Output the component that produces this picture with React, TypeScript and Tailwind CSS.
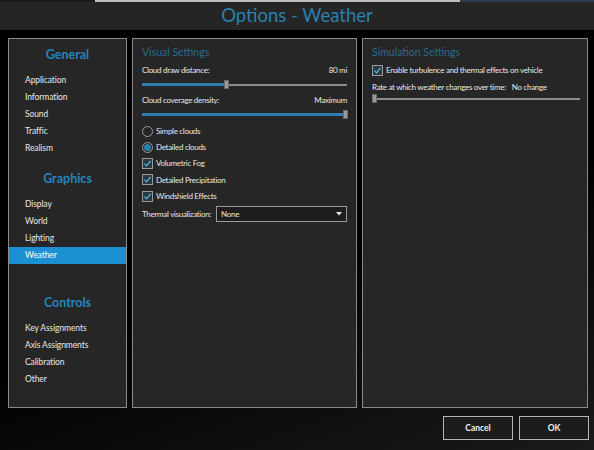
import React from "react";

const font = { fontFamily: 'Lato, "Open Sans", sans-serif' };

function NavItem({ label, selected }: { label: string; selected?: boolean }) {
  return (
    <div
      className={
        "h-[17px] pl-[16px] flex items-center text-[8.5px] tracking-[-0.1px] whitespace-nowrap " +
        (selected ? "bg-[#1b8fcf] text-white" : "text-[#e6e6e6]")
      }
    >
      {label}
    </div>
  );
}

function Header({ label }: { label: string }) {
  return (
    <div className="h-[30px] flex items-center justify-center text-[12.5px] font-bold text-[#2485bd]">
      {label}
    </div>
  );
}

function Slider({ pct, thumb }: { pct: number; thumb: number }) {
  return (
    <div className="relative h-[9px] flex items-center">
      <div className="w-full h-[2px] bg-[#8c8c8c]" />
      <div className="absolute left-0 h-[3px] bg-[#2a7fb0]" style={{ width: `${pct}%` }} />
      <div
        className="absolute w-[5px] h-[9px] bg-[#9a9a9a] border border-[#6a6a6a]"
        style={{ left: `calc(${thumb}% - 2px)` }}
      />
    </div>
  );
}

const txt = "text-[8px] tracking-[-0.3px] text-[#e6e6e6]";

function Check({ label }: { label: string }) {
  return (
    <div className="flex items-center h-[16px] gap-[3px] whitespace-nowrap">
      <div className="w-[11px] h-[11px] border border-[#9a9a9a] bg-[#2a3a44] flex items-center justify-center shrink-0">
        <svg width="9" height="9" viewBox="0 0 9 9">
          <path d="M1.5 4.6 L3.6 6.8 L7.6 1.8" stroke="#5fb3d8" strokeWidth="1.3" fill="none" />
        </svg>
      </div>
      <span className={txt}>{label}</span>
    </div>
  );
}

function Radio({ label, on }: { label: string; on?: boolean }) {
  return (
    <div className="flex items-center h-[16px] gap-[3px] whitespace-nowrap">
      <div className="w-[11px] h-[11px] rounded-full border border-[#9a9a9a] flex items-center justify-center shrink-0">
        {on && <div className="w-[7px] h-[7px] rounded-full bg-[#2a7fb0]" />}
      </div>
      <span className={txt}>{label}</span>
    </div>
  );
}

export default function App() {
  return (
    <div
      className="w-[594px] h-[450px] bg-[linear-gradient(160deg,#000_55%,#1a1a1a)] flex flex-col overflow-hidden"
      style={font}
    >
      <div className="h-[2px] flex">
        <div className="w-[95px] bg-[#1a1a1a]" />
        <div className="w-[365px] bg-[#bdbdbd]" />
        <div className="flex-1 bg-[#2c3b4d]" />
      </div>
      <div className="h-[28px] bg-[#252525] flex items-center justify-center text-[18.5px] text-[#2a80ae]">
        Options - Weather
      </div>
      <div className="flex gap-[5px] pl-[8px] pt-[8px] h-[378px]">
        <div className="w-[119px] h-[370px] border border-[#8a8a8a] bg-[#262626] pt-[1px]">
          <Header label="General" />
          <div className="pt-[2px]">
            <NavItem label="Application" />
            <NavItem label="Information" />
            <NavItem label="Sound" />
            <NavItem label="Traffic" />
            <NavItem label="Realism" />
          </div>
          <div className="h-[7px]" />
          <Header label="Graphics" />
          <div className="pt-[2px]">
            <NavItem label="Display" />
            <NavItem label="World" />
            <NavItem label="Lighting" />
            <NavItem label="Weather" selected />
          </div>
          <div className="h-[24px]" />
          <Header label="Controls" />
          <div className="pt-[2px]">
            <NavItem label="Key Assignments" />
            <NavItem label="Axis Assignments" />
            <NavItem label="Calibration" />
            <NavItem label="Other" />
          </div>
        </div>
        <div className="w-[225px] h-[370px] border border-[#8a8a8a] bg-[#262626] px-[9px] pt-[5px]">
          <div className="text-[10.5px] text-[#2a6a8e] h-[16px] leading-[16px]">Visual Settings</div>
          <div className={"flex justify-between h-[14px] items-center mt-[3px] " + txt}>
            <span>Cloud draw distance:</span>
            <span>80 mi</span>
          </div>
          <div className="mt-[3px]">
            <Slider pct={41} thumb={41} />
          </div>
          <div className={"flex justify-between h-[14px] items-center mt-[4px] " + txt}>
            <span>Cloud coverage density:</span>
            <span>Maximum</span>
          </div>
          <div className="mt-[3px]">
            <Slider pct={99} thumb={99} />
          </div>
          <div className="mt-[4px] flex flex-col">
            <Radio label="Simple clouds" />
            <Radio label="Detailed clouds" on />
            <Check label="Volumetric Fog" />
            <div className="h-[17px] flex items-center"><Check label="Detailed Precipitation" /></div>
            <Check label="Windshield Effects" />
          </div>
          <div className="flex items-center mt-[2px] gap-[5px]">
            <span className={"whitespace-nowrap " + txt}>Thermal visualization:</span>
            <div className="flex-1 h-[16px] border border-[#9a9a9a] bg-[#1e1e1e] flex items-center justify-between px-[4px]">
              <span className={txt}>None</span>
              <svg width="6" height="4" viewBox="0 0 6 4">
                <path d="M0 0 L6 0 L3 3.5 Z" fill="#e6e6e6" />
              </svg>
            </div>
          </div>
        </div>
        <div className="w-[226px] h-[370px] border border-[#8a8a8a] bg-[#262626] pl-[9px] pr-[7px] pt-[5px]">
          <div className="text-[10.5px] text-[#2a6a8e] h-[16px] leading-[16px]">Simulation Settings</div>
          <div className="mt-[2px]">
            <Check label="Enable turbulence and thermal effects on vehicle" />
          </div>
          <div className={"flex h-[14px] items-center mt-[2px] gap-[6px] whitespace-nowrap " + txt}>
            <span>Rate at which weather changes over time:</span>
            <span>No change</span>
          </div>
          <div>
            <Slider pct={0} thumb={1} />
          </div>
        </div>
      </div>
      <div className="flex justify-end gap-[6px] pr-[5px] pt-[8px]">
        <button className="w-[70px] h-[24px] border border-[#b5b5b5] bg-[#1c1c1c] text-[8.5px] font-bold text-[#f0f0f0]">
          Cancel
        </button>
        <button className="w-[70px] h-[24px] border border-[#b5b5b5] bg-[#1c1c1c] text-[8.5px] font-bold text-[#f0f0f0]">
          OK
        </button>
      </div>
    </div>
  );
}
